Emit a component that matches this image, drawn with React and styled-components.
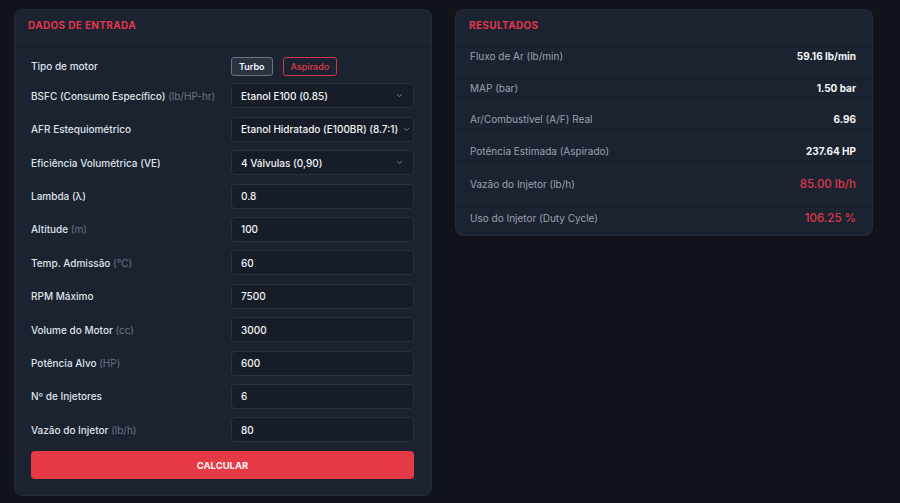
import React from 'react';
import styled, { createGlobalStyle } from 'styled-components';

const GlobalStyle = createGlobalStyle`
  html, body {
    margin: 0;
    padding: 0;
    background: #10141a;
    font-family: Inter, "Noto Sans", "Liberation Sans", sans-serif;
    color: #e6e9ee;
  }
  * { box-sizing: border-box; }
`;

const Page = styled.div`
  display: flex;
  align-items: flex-start;
  gap: 23px;
  padding: 9px 27px 8px 14px;
  min-height: 503px;
`;

const Card = styled.section`
  width: 418px;
  background: #1b2230;
  border: 1px solid #222a37;
  border-radius: 8px;
  overflow: hidden;
`;

const CardHeader = styled.h2`
  margin: 0;
  height: 31px;
  display: flex;
  align-items: center;
  padding: 0 13px;
  font-size: 10px;
  font-weight: 700;
  letter-spacing: 0.35px;
  color: #e0374c;
  text-transform: uppercase;
  border-bottom: 1px solid #212937;
`;

const Form = styled.div`
  display: grid;
  grid-template-columns: 1fr 183px;
  align-items: center;
  row-gap: 8.4px;
  padding: 16px 17px 16px 16px;
`;

const Label = styled.label`
  font-size: 10px;
  font-weight: 500;
  color: #dfe3ea;
  white-space: nowrap;
`;

const Unit = styled.span`
  color: #6b7483;
  font-weight: 400;
`;

const Toggles = styled.div`
  display: flex;
  gap: 10px;
  margin-bottom: -1px;
`;

const Toggle = styled.button`
  height: 19px;
  padding: 0 7px;
  border-radius: 3px;
  font-family: inherit;
  font-size: 9px;
  font-weight: ${p => (p.active ? 600 : 500)};
  cursor: pointer;
  border: 1px solid ${p => (p.active ? '#6b7482' : '#d23448')};
  background: ${p => (p.active ? '#2b3341' : 'transparent')};
  color: ${p => (p.active ? '#f2f4f7' : '#e0374c')};
`;

const Field = styled.div`
  position: relative;
  height: 25px;
`;

const Input = styled.input`
  width: 100%;
  height: 100%;
  padding: 0 9px;
  background: #171d28;
  border: 1px solid #29313e;
  border-radius: 4px;
  color: #f1f3f6;
  font-family: inherit;
  font-size: 10px;
  font-weight: 500;
  outline: none;
`;

const Select = styled.div`
  display: flex;
  align-items: center;
  justify-content: space-between;
  gap: 4px;
  height: 100%;
  padding: 0 9px;
  background: #171d28;
  border: 1px solid #29313e;
  border-radius: 4px;
  color: #f1f3f6;
  font-size: 10px;
  font-weight: 500;
  white-space: nowrap;
  overflow: hidden;
`;

const Chevron = () => (
  <svg width="9" height="9" viewBox="0 0 24 24" fill="none" stroke="#7c8594" strokeWidth="2.5" strokeLinecap="round" strokeLinejoin="round" style={{ flexShrink: 0 }}>
    <path d="M6 9l6 6 6-6" />
  </svg>
);

const SubmitButton = styled.button`
  grid-column: 1 / -1;
  height: 28px;
  margin-top: 0.5px;
  background: #e63946;
  border: none;
  border-radius: 4px;
  color: #fff2f3;
  font-family: inherit;
  font-size: 9.5px;
  font-weight: 700;
  cursor: pointer;
`;

const ResultRow = styled.div`
  display: flex;
  align-items: center;
  justify-content: space-between;
  height: ${p => (p.big ? '34px' : '31.5px')};
  padding: 0 16px 0 14px;
  border-bottom: 1px solid #212937;
  &:last-child { border-bottom: none; }
`;

const ResultLabel = styled.span`
  font-size: 10px;
  color: #9aa2af;
`;

const ResultValue = styled.span`
  font-size: ${p => (p.alert ? '11.5px' : '10px')};
  font-weight: ${p => (p.alert ? 500 : 700)};
  color: ${p => (p.alert ? '#e0374c' : '#f5f6f8')};
`;

const fields = [
  { label: 'Lambda (λ)', value: '0.8' },
  { label: 'Altitude', unit: '(m)', value: '100' },
  { label: 'Temp. Admissão', unit: '(°C)', value: '60' },
  { label: 'RPM Máximo', value: '7500' },
  { label: 'Volume do Motor', unit: '(cc)', value: '3000' },
  { label: 'Potência Alvo', unit: '(HP)', value: '600' },
  { label: 'Nº de Injetores', value: '6' },
  { label: 'Vazão do Injetor', unit: '(lb/h)', value: '80' },
];

const selects = [
  { label: 'BSFC (Consumo Específico)', unit: '(lb/HP-hr)', value: 'Etanol E100 (0.85)' },
  { label: 'AFR Estequiométrico', value: 'Etanol Hidratado (E100BR) (8.7:1)' },
  { label: 'Eficiência Volumétrica (VE)', value: '4 Válvulas (0,90)' },
];

const results = [
  { label: 'Fluxo de Ar (lb/min)', value: '59.16 lb/min' },
  { label: 'MAP (bar)', value: '1.50 bar' },
  { label: 'Ar/Combustível (A/F) Real', value: '6.96' },
  { label: 'Potência Estimada (Aspirado)', value: '237.64 HP' },
  { label: 'Vazão do Injetor (lb/h)', value: '85.00 lb/h', alert: true },
  { label: 'Uso do Injetor (Duty Cycle)', value: '106.25 %', alert: true },
];

export default function App() {
  return (
    <>
      <GlobalStyle />
      <Page>
        <Card>
          <CardHeader>Dados de Entrada</CardHeader>
          <Form>
            <Label>Tipo de motor</Label>
            <Toggles>
              <Toggle active>Turbo</Toggle>
              <Toggle>Aspirado</Toggle>
            </Toggles>
            {selects.map(s => (
              <React.Fragment key={s.label}>
                <Label>
                  {s.label} {s.unit && <Unit>{s.unit}</Unit>}
                </Label>
                <Field>
                  <Select>
                    <span>{s.value}</span>
                    <Chevron />
                  </Select>
                </Field>
              </React.Fragment>
            ))}
            {fields.map(f => (
              <React.Fragment key={f.label}>
                <Label>
                  {f.label} {f.unit && <Unit>{f.unit}</Unit>}
                </Label>
                <Field>
                  <Input defaultValue={f.value} />
                </Field>
              </React.Fragment>
            ))}
            <SubmitButton>CALCULAR</SubmitButton>
          </Form>
        </Card>
        <Card>
          <CardHeader>Resultados</CardHeader>
          {results.map(r => (
            <ResultRow key={r.label} big={r.alert}>
              <ResultLabel>{r.label}</ResultLabel>
              <ResultValue alert={r.alert}>{r.value}</ResultValue>
            </ResultRow>
          ))}
        </Card>
      </Page>
    </>
  );
}
